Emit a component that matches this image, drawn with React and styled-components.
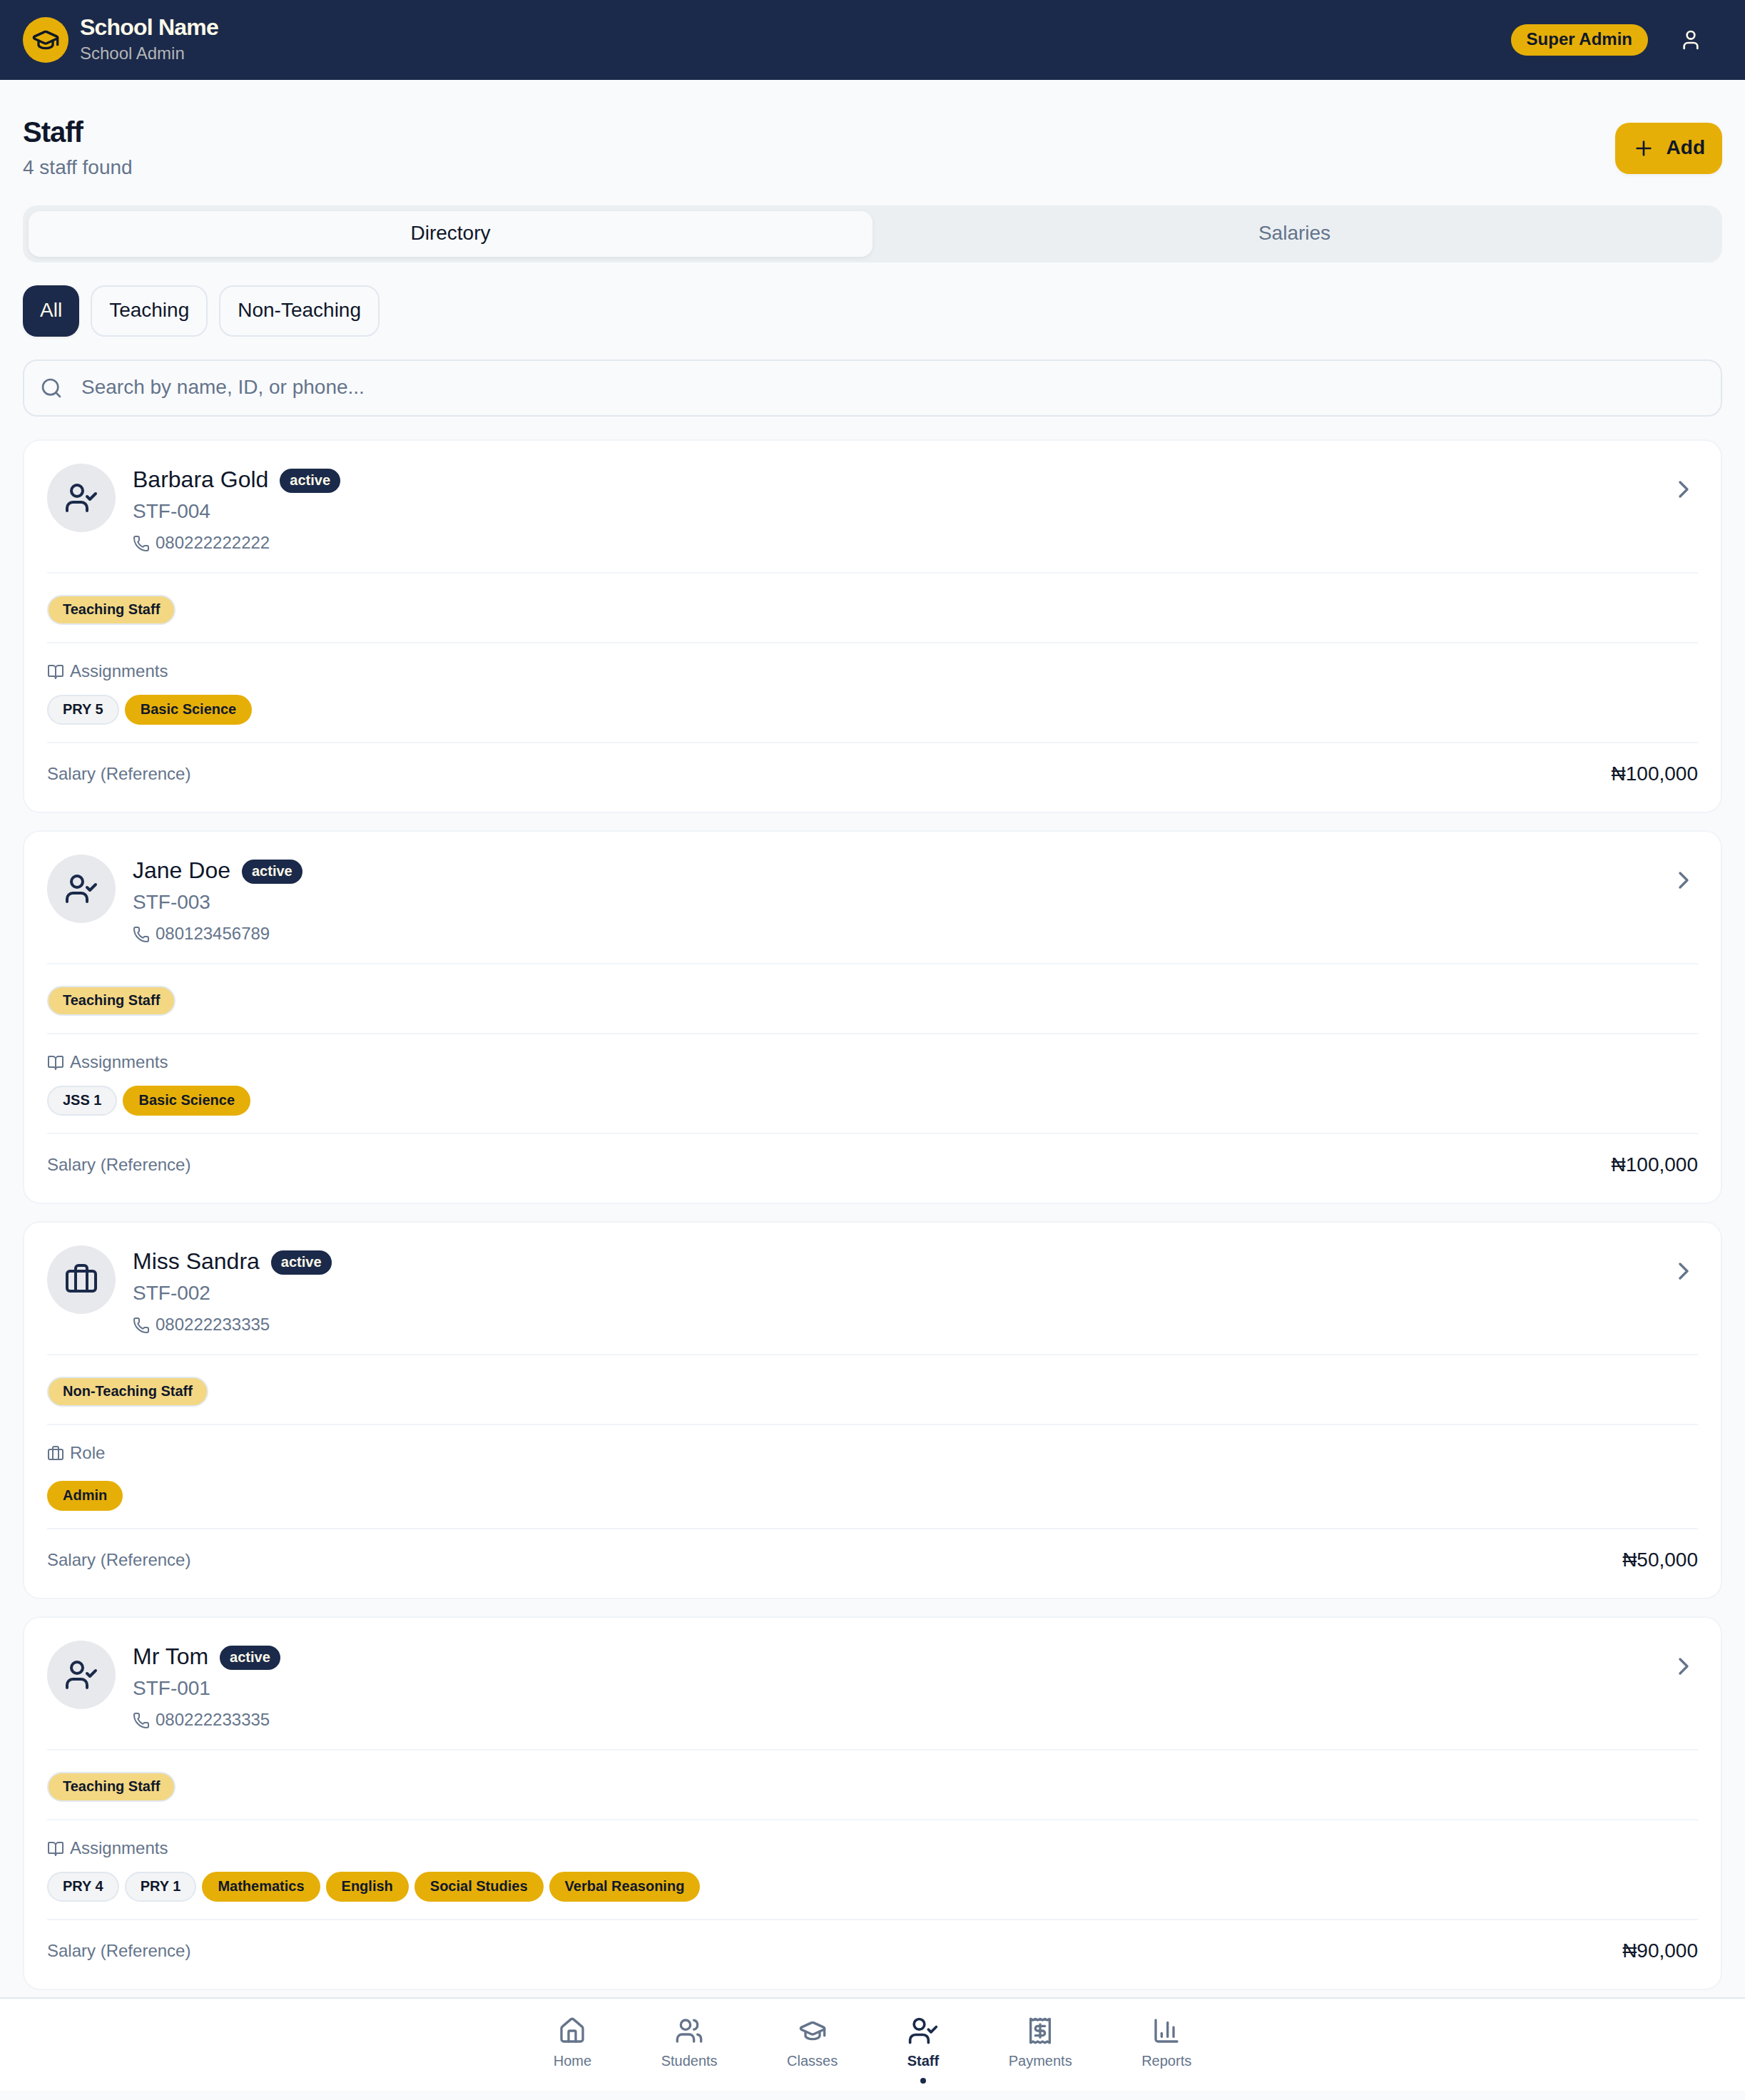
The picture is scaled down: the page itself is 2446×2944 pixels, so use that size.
import React from 'react';
import styled, { createGlobalStyle, css } from 'styled-components';
import {
  GraduationCap, User, Plus, Search, UserCheck, Phone, BookOpen,
  ChevronRight, House, Users, ChartColumn,
} from 'lucide-react';

const c = {
  navy: '#1b2a4a',
  cream: '#fef9e9',
  gold: '#e6af08',
  onGold: '#101828',
  goldSoft: '#f3d783',
  ink: '#0f172a',
  muted: '#64748b',
  page: '#f9fafc',
  border: '#e1e8ef',
  hairline: '#f0f4f8',
};

const Global = createGlobalStyle`
  *, *::before, *::after { box-sizing: border-box; }
  body {
    margin: 0;
    background: ${c.page};
    color: ${c.ink};
    font-family: "Liberation Sans", Arial, sans-serif;
    overflow: hidden;
  }
  h1, h2, h3, p { margin: 0; font-weight: 400; }
  button { font: inherit; color: inherit; border: 0; background: none; padding: 0; }
  svg { display: block; flex: none; }
`;

/* Sets size and line box, lifting the glyphs slightly above the box centre. */
const type = (size, line, lift = 1) => css`
  font-size: ${size}px;
  line-height: ${line - lift * 2}px;
  padding-bottom: ${lift * 2}px;
`;

const Page = styled.div`
  height: 2944px;
  display: flex;
  flex-direction: column;
`;

const Header = styled.header`
  height: 112px;
  flex: none;
  padding: 0 32px;
  display: flex;
  align-items: center;
  justify-content: space-between;
  background: ${c.navy};
  color: ${c.cream};
`;

const Brand = styled.div`
  display: flex;
  align-items: center;
  gap: 16px;
`;

const Logo = styled.div`
  width: 64px;
  height: 64px;
  border-radius: 50%;
  display: grid;
  place-items: center;
  background: ${c.gold};
  color: ${c.onGold};
`;

const SchoolName = styled.h1`
  ${type(32, 40, 2)}
  font-weight: 700;
  letter-spacing: -0.025em;
`;

const Portal = styled.p`
  ${type(24, 32)}
  color: #b4b5b8;
`;

const Account = styled.div`
  display: flex;
  align-items: center;
  gap: 16px;
`;

const RoleBadge = styled.div`
  height: 44px;
  padding: 6px 22px;
  border-radius: 22px;
  background: ${c.gold};
  color: ${c.onGold};
  font-weight: 700;
`;

const RoleText = styled.div`
  ${type(24, 32)}
`;

const ProfileButton = styled.button`
  width: 88px;
  height: 88px;
  display: grid;
  place-items: center;
`;

const Main = styled.main`
  flex: none;
  padding: 48px 32px 10px;
`;

const TitleRow = styled.div`
  display: flex;
  align-items: center;
  justify-content: space-between;
`;

const Title = styled.h2`
  ${type(40, 56, 3)}
  font-weight: 700;
  letter-spacing: -0.025em;
`;

const Subtitle = styled.p`
  ${type(28, 40)}
  color: ${c.muted};
`;

const AddButton = styled.button`
  height: 72px;
  padding: 0 24px;
  display: flex;
  align-items: center;
  gap: 16px;
  border-radius: 20px;
  background: ${c.gold};
  color: ${c.onGold};
  font-weight: 700;
  box-shadow: 0 2px 4px rgba(0, 0, 0, 0.05);
`;

const Label = styled.span`
  display: block;
  ${type(28, 40)}
`;

const Tabs = styled.div`
  margin-top: 32px;
  height: 80px;
  padding: 8px;
  display: grid;
  grid-template-columns: 1fr 1fr;
  border-radius: 20px;
  background: #ebeff2;
`;

const Tab = styled.button`
  display: flex;
  align-items: center;
  justify-content: center;
  border-radius: 16px;
  color: ${(p) => (p.$active ? c.ink : c.muted)};
  background: ${(p) => (p.$active ? c.page : 'transparent')};
  box-shadow: ${(p) => (p.$active ? '0 2px 6px rgba(0, 0, 0, 0.06)' : 'none')};
`;

const Filters = styled.div`
  margin-top: 32px;
  display: flex;
  gap: 16px;
`;

const Filter = styled.button`
  height: 72px;
  display: flex;
  align-items: center;
  border-radius: 20px;
  padding: 0 24px;
  ${(p) => (p.$active
    ? css`
        background: ${c.navy};
        color: ${c.cream};
        box-shadow: 0 2px 4px rgba(0, 0, 0, 0.05);
      `
    : css`
        border: 2px solid ${c.border};
      `)}
`;

const SearchBox = styled.div`
  margin-top: 32px;
  height: 80px;
  padding: 0 22px;
  display: flex;
  align-items: center;
  gap: 26px;
  border: 2px solid ${c.border};
  border-radius: 20px;
  color: ${c.muted};
`;

const CardList = styled.div`
  margin-top: 32px;
  display: flex;
  flex-direction: column;
  gap: 24px;
`;

const Card = styled.article`
  padding: 32px;
  border: 2px solid ${c.hairline};
  border-radius: 24px;
  background: #fff;
`;

const CardHead = styled.div`
  display: flex;
  align-items: flex-start;
  gap: 24px;
  padding-bottom: 24px;
`;

const Avatar = styled.div`
  width: 96px;
  height: 96px;
  border-radius: 50%;
  display: grid;
  place-items: center;
  background: #e8e9ed;
  color: ${c.navy};
`;

const Identity = styled.div`
  flex: 1;
`;

const NameRow = styled.div`
  display: flex;
  align-items: center;
  gap: 16px;
`;

const Name = styled.h3`
  ${type(32, 48, 2)}
`;

const StaffId = styled.p`
  ${type(28, 40)}
  color: ${c.muted};
`;

const PhoneRow = styled.div`
  margin-top: 8px;
  display: flex;
  align-items: center;
  gap: 8px;
  color: ${c.muted};
`;

const Small = styled.span`
  display: block;
  ${type(24, 32)}
  color: ${c.muted};
`;

const Chevron = styled.div`
  margin-top: 16px;
  color: ${c.muted};
`;

const Section = styled.section`
  border-top: 2px solid ${c.hairline};
  padding: 24px 0;
`;

const SalaryRow = styled(Section)`
  padding-bottom: 0;
  display: flex;
  align-items: center;
  justify-content: space-between;
`;

const SectionLabel = styled.div`
  display: flex;
  align-items: center;
  gap: 8px;
  color: ${c.muted};
`;

const PillRow = styled.div`
  display: flex;
  gap: 8px;
  margin-top: ${(p) => p.$gap}px;
`;

const tones = {
  soft: css`background: ${c.goldSoft}; border-color: ${c.border}; color: ${c.ink};`,
  plain: css`background: #f3f4f6; border-color: ${c.border}; color: ${c.ink};`,
  gold: css`background: ${c.gold}; border-color: ${c.gold}; color: ${c.onGold};`,
  active: css`background: ${c.navy}; border-color: ${c.navy}; color: ${c.cream};`,
};

const PillBox = styled.div`
  padding: ${(p) => (p.$tone === 'active' ? '0 12px' : '4px 20px')};
  border: 2px solid;
  border-radius: 21px;
  ${(p) => tones[p.$tone]}
`;

const PillText = styled.div`
  ${type(20, 30)}
  font-weight: 700;
  white-space: nowrap;
`;

const Nav = styled.nav`
  flex: none;
  height: 131px;
  border-top: 2px solid ${c.border};
  background: #fff;
  display: flex;
  justify-content: center;
`;

const NavInner = styled.div`
  width: 992px;
  display: flex;
  justify-content: space-around;
  padding-top: 25px;
`;

const NavItem = styled.div`
  position: relative;
  display: flex;
  flex-direction: column;
  align-items: center;
  gap: 8px;
  color: ${(p) => (p.$active ? c.navy : c.muted)};
  font-weight: ${(p) => (p.$active ? 700 : 400)};

  svg {
    transform: ${(p) => (p.$active ? 'scale(1.1)' : 'none')};
  }
`;

const NavText = styled.span`
  display: block;
  ${type(20, 30)}
`;

const ActiveDot = styled.span`
  position: absolute;
  top: 86px;
  left: 50%;
  width: 8px;
  height: 8px;
  margin-left: -4px;
  border-radius: 50%;
  background: ${c.navy};
`;

const ReceiptIcon = ({ size }) => (
  <svg width={size} height={size} viewBox="0 0 24 24" fill="none" stroke="currentColor" strokeWidth="2" strokeLinecap="round" strokeLinejoin="round">
    <path d="M4 2v20l2-1 2 1 2-1 2 1 2-1 2 1 2-1 2 1V2l-2 1-2-1-2 1-2-1-2 1-2-1-2 1Z" />
    <path d="M16 8h-6a2 2 0 1 0 0 4h4a2 2 0 1 1 0 4H8" />
    <path d="M12 17.5v-11" />
  </svg>
);

const BriefcaseIcon = ({ size }) => (
  <svg width={size} height={size} viewBox="0 0 24 24" fill="none" stroke="currentColor" strokeWidth="2" strokeLinecap="round" strokeLinejoin="round">
    <path d="M16 20V4a2 2 0 0 0-2-2h-4a2 2 0 0 0-2 2v16" />
    <rect width="20" height="14" x="2" y="6" rx="2" />
  </svg>
);

const Pill = ({ tone, children }) => (
  <PillBox $tone={tone}><PillText>{children}</PillText></PillBox>
);

const staff = [
  { id: 'STF-004', name: 'Barbara Gold', phone: '080222222222', teaching: true, classes: ['PRY 5'], subjects: ['Basic Science'], salary: '₦100,000' },
  { id: 'STF-003', name: 'Jane Doe', phone: '080123456789', teaching: true, classes: ['JSS 1'], subjects: ['Basic Science'], salary: '₦100,000' },
  { id: 'STF-002', name: 'Miss Sandra', phone: '080222233335', teaching: false, role: 'Admin', salary: '₦50,000' },
  { id: 'STF-001', name: 'Mr Tom', phone: '080222233335', teaching: true, classes: ['PRY 4', 'PRY 1'], subjects: ['Mathematics', 'English', 'Social Studies', 'Verbal Reasoning'], salary: '₦90,000' },
];

const navItems = [
  ['Home', House],
  ['Students', Users],
  ['Classes', GraduationCap],
  ['Staff', UserCheck],
  ['Payments', ReceiptIcon],
  ['Reports', ChartColumn],
];

const StaffCard = ({ person }) => {
  const AvatarIcon = person.teaching ? UserCheck : BriefcaseIcon;
  return (
    <Card>
      <CardHead>
        <Avatar><AvatarIcon size={48} /></Avatar>
        <Identity>
          <NameRow>
            <Name>{person.name}</Name>
            <Pill tone="active">active</Pill>
          </NameRow>
          <StaffId>{person.id}</StaffId>
          <PhoneRow><Phone size={24} /><Small>{person.phone}</Small></PhoneRow>
        </Identity>
        <Chevron><ChevronRight size={40} /></Chevron>
      </CardHead>
      <Section>
        <PillRow $gap={6}>
          <Pill tone="soft">{person.teaching ? 'Teaching Staff' : 'Non-Teaching Staff'}</Pill>
        </PillRow>
      </Section>
      <Section>
        <SectionLabel>
          {person.teaching ? <BookOpen size={24} /> : <BriefcaseIcon size={24} />}
          <Small>{person.teaching ? 'Assignments' : 'Role'}</Small>
        </SectionLabel>
        {person.teaching ? (
          <PillRow $gap={16}>
            {person.classes.map((name) => <Pill key={name} tone="plain">{name}</Pill>)}
            {person.subjects.map((name) => <Pill key={name} tone="gold">{name}</Pill>)}
          </PillRow>
        ) : (
          <PillRow $gap={22}><Pill tone="gold">{person.role}</Pill></PillRow>
        )}
      </Section>
      <SalaryRow>
        <Small>Salary (Reference)</Small>
        <Label>{person.salary}</Label>
      </SalaryRow>
    </Card>
  );
};

export default function App() {
  return (
    <Page>
      <Global />
      <Header>
        <Brand>
          <Logo><GraduationCap size={40} /></Logo>
          <div>
            <SchoolName>School Name</SchoolName>
            <Portal>School Admin</Portal>
          </div>
        </Brand>
        <Account>
          <RoleBadge><RoleText>Super Admin</RoleText></RoleBadge>
          <ProfileButton><User size={32} /></ProfileButton>
        </Account>
      </Header>
      <Main>
        <TitleRow>
          <div>
            <Title>Staff</Title>
            <Subtitle>4 staff found</Subtitle>
          </div>
          <AddButton><Plus size={32} /><Label>Add</Label></AddButton>
        </TitleRow>
        <Tabs>
          <Tab $active><Label>Directory</Label></Tab>
          <Tab><Label>Salaries</Label></Tab>
        </Tabs>
        <Filters>
          <Filter $active><Label>All</Label></Filter>
          <Filter><Label>Teaching</Label></Filter>
          <Filter><Label>Non-Teaching</Label></Filter>
        </Filters>
        <SearchBox>
          <Search size={32} />
          <Label>Search by name, ID, or phone...</Label>
        </SearchBox>
        <CardList>
          {staff.map((person) => <StaffCard key={person.id} person={person} />)}
        </CardList>
      </Main>
      <Nav>
        <NavInner>
          {navItems.map(([name, Icon]) => (
            <NavItem key={name} $active={name === 'Staff'}>
              <Icon size={40} />
              <NavText>{name}</NavText>
              {name === 'Staff' && <ActiveDot />}
            </NavItem>
          ))}
        </NavInner>
      </Nav>
    </Page>
  );
}
